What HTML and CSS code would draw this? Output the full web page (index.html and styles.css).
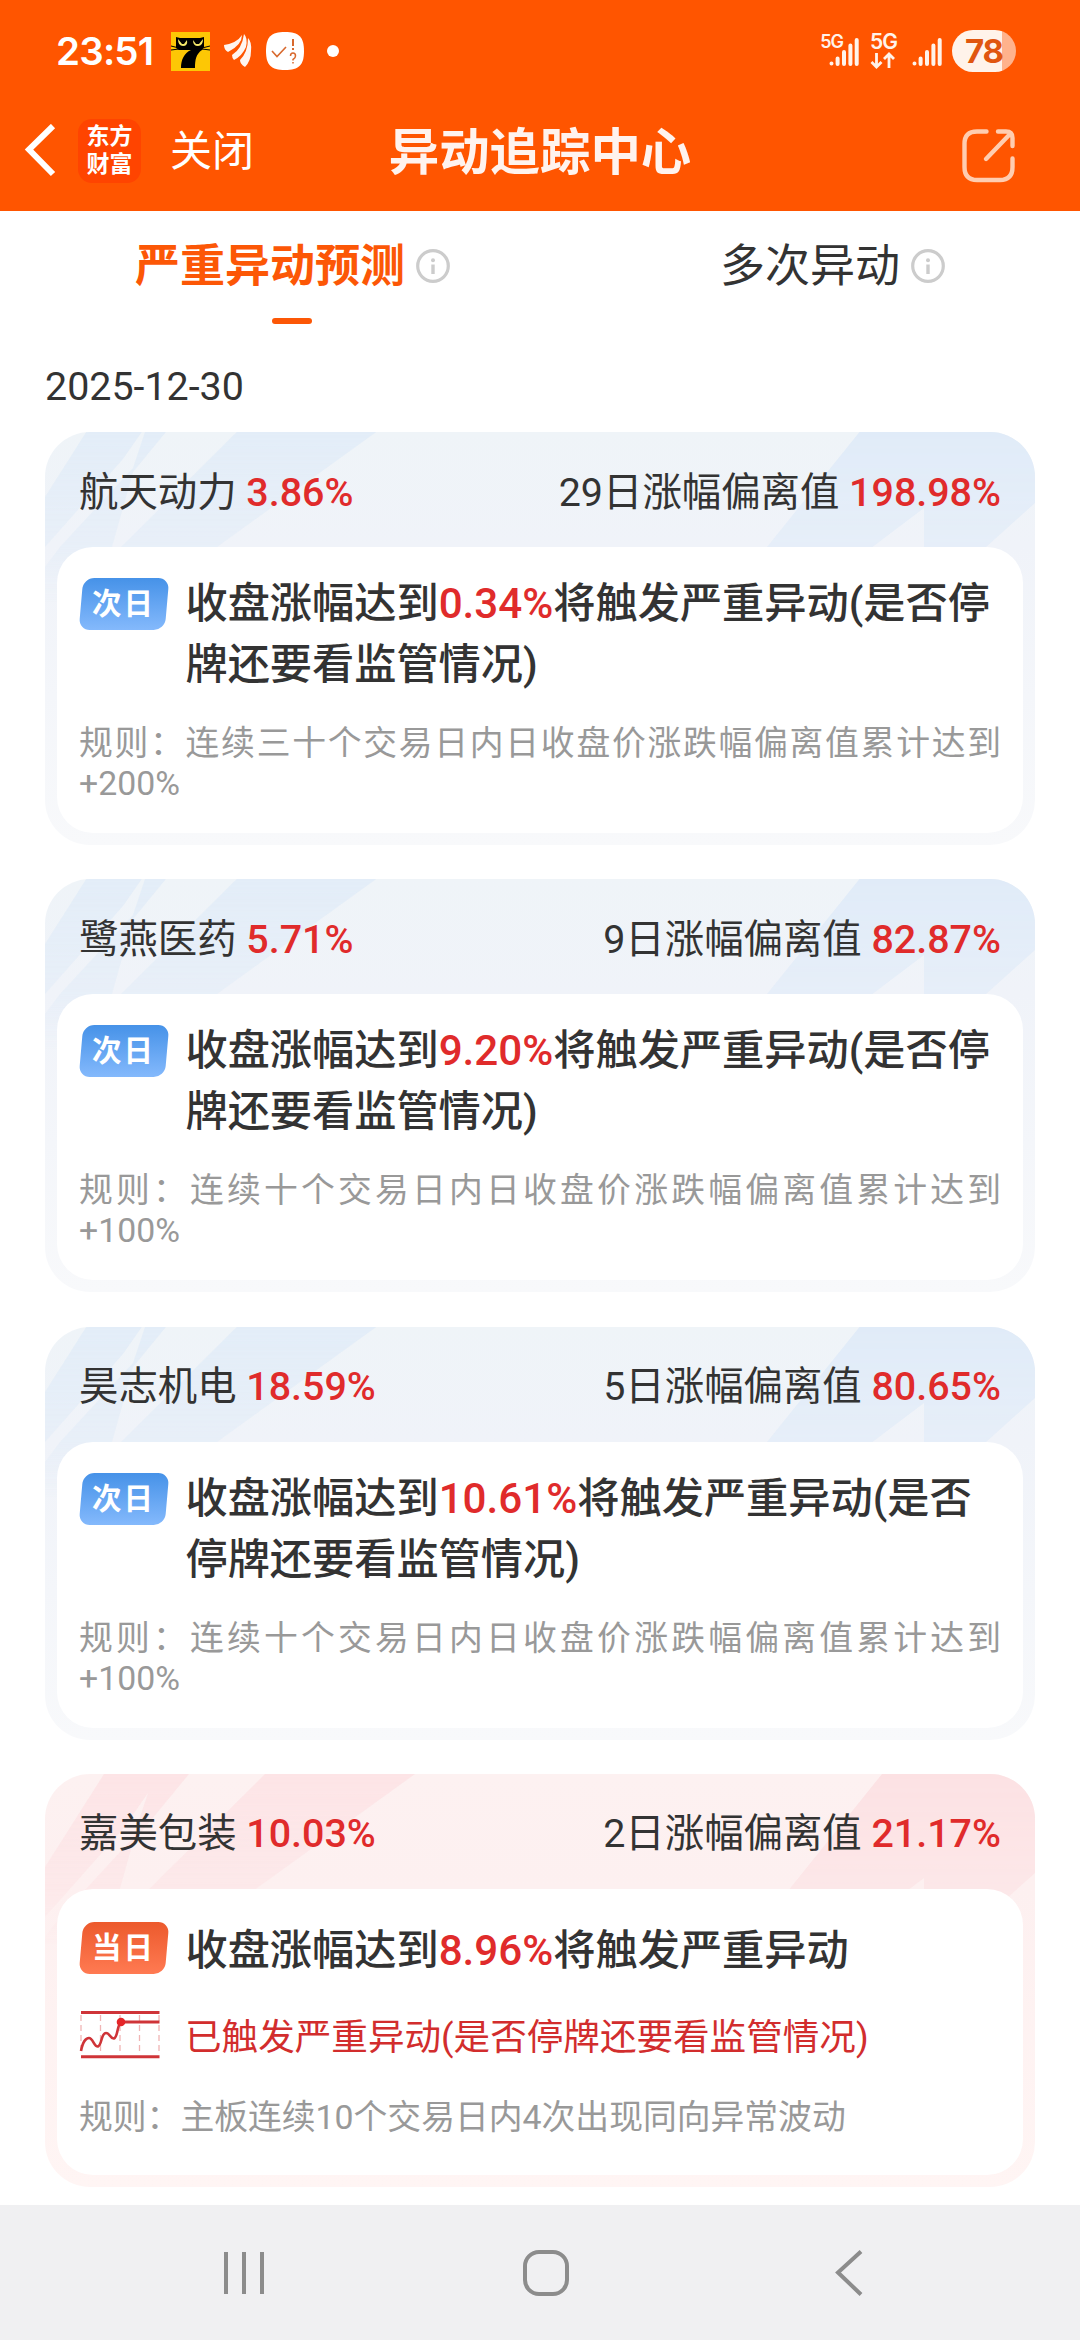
FILE: index.html
```html
<!DOCTYPE html>
<html lang="zh-CN">
<head>
    <meta charset="UTF-8">
    <meta name="viewport" content="width=device-width, initial-scale=1.0">
    <title>异动追踪中心</title>
    <link rel="stylesheet" href="styles.css">
</head>
<body>

<!-- Shared shapes -->
<svg class="defs" width="0" height="0">
    <symbol id="stripes" viewBox="0 -28 990 200">
        <path opacity="0.8" d="M59-28H144L88 40L67 115L50 172H0V135L15 115L88 36L103-9L78 27L0 115V65Z"/>
        <path opacity="0.8" d="M220-28H370L172 115L93 172H20L76 115Z"/>
        <path d="M837-28H990V71L941 115L877 172H879V76L752 172H676L722 115Z"/>
    </symbol>
    <symbol id="info" viewBox="0 0 34 34">
        <circle cx="17" cy="17" r="15.3" fill="none" stroke="#ccc" stroke-width="3.2"/>
        <circle cx="17" cy="11.3" r="2" fill="#ccc"/>
        <path d="M17 15.5V25" stroke="#ccc" stroke-width="3.4"/>
    </symbol>
</svg>

<header class="header">
    <div class="status-bar">
        <span class="time">23:51</span>
        <svg class="cat-icon" width="39" height="39" viewBox="0 0 39 39">
            <rect width="39" height="39" fill="#fdc705"/>
            <path d="M5 5L9 6H29L33 5V15L31 18C25 22 24 28 24 36H10C10 28 13 21 20 18H8L5 16Z" fill="#000"/>
            <path d="M0 14L8 16M0 18L8 17M39 14L31 16M39 18L31 17" stroke="#000" stroke-width="1"/>
            <path d="M7 7Q7 14 12 14Q17 14 16 8L13 12H11Z" fill="#f5e96b"/>
            <path d="M32 7Q32 14 27 14Q22 14 22 8L25 12H28Z" fill="#f5e96b"/>
            <path d="M12 8V12M26 8V12" stroke="#000" stroke-width="2"/>
        </svg>
        <svg class="wing-icon" width="28" height="34" viewBox="0 0 28 34">
            <path d="M0 11Q13 9 18 1Q18 11 4 18Q0 16 0 11Z" fill="#fff6f0"/>
            <path d="M8 21Q18 15 20 0Q24 4 22 13Q18 22 10 26Q8 24 8 21Z" fill="#fff6f0"/>
            <path d="M16 26Q24 18 24 4Q28 8 27 17Q27 27 21 33Q16 30 16 26Z" fill="#fff6f0"/>
        </svg>
        <svg class="check-icon" width="38" height="38" viewBox="0 0 38 38">
            <path d="M19 0C33 0 38 5 38 19S33 38 19 38S0 33 0 19S5 0 19 0Z" fill="#fff"/>
            <path d="M6 19L11 24.500L20 15" fill="none" stroke="#d8692e" stroke-width="1.600"/>
            <path d="M27 7V14M27 16V18" stroke="#d8692e" stroke-width="2"/>
            <path d="M24.500 24Q24.500 21 27 21T29.500 24Q29.500 26 27 27.500V28.500M27 30V31.500" fill="none" stroke="#d8692e" stroke-width="1.500"/>
        </svg>
        <span class="dot"></span>

        <div class="status-right">
            <span class="net net-small">5G</span>
            <svg class="signal" width="30" height="30" viewBox="0 0 30 30">
                <path d="M2.500 26.500V26.600M8.600 21.500V27M15 15V27M21.400 8.500V27M27.700 3V27" stroke="#fff3ea" stroke-width="4" stroke-linecap="round"/>
            </svg>
            <div class="net-data">
                <span class="net">5G</span>
                <svg width="26" height="17" viewBox="0 0 26 17">
                    <path d="M6.500 1V15M1.500 10L6.500 15L11.500 10M19 16V2M14 7L19 2L24 7" fill="none" stroke="#fff3ea" stroke-width="2.800"/>
                </svg>
            </div>
            <svg class="signal signal-second" width="30" height="30" viewBox="0 0 30 30">
                <path d="M2.500 26.500V26.600M8.600 21.500V27M15 15V27M21.400 8.500V27M27.700 3V27" stroke="#fff3ea" stroke-width="4" stroke-linecap="round"/>
            </svg>
            <span class="battery">78</span>
        </div>
    </div>

    <div class="title-bar">
        <div class="title-left">
            <svg width="32" height="54" viewBox="0 0 32 54">
                <path d="M29 2L5 25.500L29 50" fill="none" stroke="#fff" stroke-width="6"/>
            </svg>
            <div class="logo">东方<br>财富</div>
            <span class="close">关闭</span>
        </div>
        <h1>异动追踪中心</h1>
        <svg class="share" width="54" height="54" viewBox="0 0 54 54">
            <path d="M24.500 2.500H15Q2.500 2.500 2.500 15V38Q2.500 51 15 51H38Q50.500 51 50.500 38V29.500M50.500 17V9Q50.500 2.500 44 2.500H36M49 4L24 30" fill="none" stroke="#ffcdb0" stroke-width="4.400" stroke-linecap="round"/>
        </svg>
    </div>
</header>

<nav class="tabs">
    <div class="tab active">
        <span>严重异动预测</span>
        <svg class="info"><use href="#info"/></svg>
    </div>
    <div class="tab">
        <span>多次异动</span>
        <svg class="info"><use href="#info"/></svg>
    </div>
</nav>

<main class="list">
    <div class="date">2025-12-30</div>

    <section class="card">
        <svg class="stripes" viewBox="0 0 990 172"><use href="#stripes" y="-28" width="990" height="200"/></svg>
        <div class="card-head">
            <span>航天动力 <b>3.86%</b></span>
            <span>29日涨幅偏离值 <b>198.98%</b></span>
        </div>
        <div class="card-body">
            <div class="event">
                <span class="tag"><i>次日</i></span>
                <p>收盘涨幅达到<b>0.34%</b>将触发严重异动(是否停牌还要看监管情况)</p>
            </div>
            <p class="rule">规则：连续三十个交易日内日收盘价涨跌幅偏离值累计达到+200%</p>
        </div>
    </section>

    <section class="card">
        <svg class="stripes" viewBox="0 0 990 172"><use href="#stripes" y="-28" width="990" height="200"/></svg>
        <div class="card-head">
            <span>鹭燕医药 <b>5.71%</b></span>
            <span>9日涨幅偏离值 <b>82.87%</b></span>
        </div>
        <div class="card-body">
            <div class="event">
                <span class="tag"><i>次日</i></span>
                <p>收盘涨幅达到<b>9.20%</b>将触发严重异动(是否停牌还要看监管情况)</p>
            </div>
            <p class="rule">规则：连续十个交易日内日收盘价涨跌幅偏离值累计达到+100%</p>
        </div>
    </section>

    <section class="card">
        <svg class="stripes" viewBox="0 0 990 172"><use href="#stripes" y="-28" width="990" height="200"/></svg>
        <div class="card-head">
            <span>昊志机电 <b>18.59%</b></span>
            <span>5日涨幅偏离值 <b>80.65%</b></span>
        </div>
        <div class="card-body">
            <div class="event">
                <span class="tag"><i>次日</i></span>
                <p>收盘涨幅达到<b>10.61%</b>将触发严重异动(是否停牌还要看监管情况)</p>
            </div>
            <p class="rule">规则：连续十个交易日内日收盘价涨跌幅偏离值累计达到+100%</p>
        </div>
    </section>

    <section class="card today">
        <svg class="stripes" viewBox="0 0 990 172"><use href="#stripes" width="990" height="200"/></svg>
        <div class="card-head">
            <span>嘉美包装 <b>10.03%</b></span>
            <span>2日涨幅偏离值 <b>21.17%</b></span>
        </div>
        <div class="card-body">
            <div class="event">
                <span class="tag"><i>当日</i></span>
                <p>收盘涨幅达到<b>8.96%</b>将触发严重异动</p>
            </div>
            <div class="triggered">
                <svg width="82" height="50" viewBox="0 0 82 50">
                    <path d="M2 5V45M21.500 5V45M41 5V45M60.500 5V45M80 5V45" stroke="#f0b4b4" stroke-width="1.300" stroke-dasharray="6 4"/>
                    <path d="M2 2.500H80.500M2 46.800H80.500M42 12H80.500" stroke="#cf3438" stroke-width="3"/>
                    <path d="M2 41C4 30 8 28 10 28C14 28 15 37 19 36.500C23 35 22 23 27 23C31 23 31 29 35 28.500C39 27 38 15 42 12" fill="none" stroke="#cf3438" stroke-width="2.600"/>
                    <circle cx="42" cy="12" r="4.300" fill="#e52528"/>
                </svg>
                <span>已触发严重异动(是否停牌还要看监管情况)</span>
            </div>
            <p class="rule">规则：主板连续10个交易日内4次出现同向异常波动</p>
        </div>
    </section>
</main>

<footer class="nav-bar">
    <svg width="40" height="46" viewBox="0 0 40 46">
        <path d="M2 2V44M20 2V44M38 2V44" stroke="#8c8c8c" stroke-width="4"/>
    </svg>
    <svg class="home" width="46" height="46" viewBox="0 0 46 46">
        <rect x="2" y="2" width="42" height="42" rx="14" fill="none" stroke="#8c8c8c" stroke-width="4"/>
    </svg>
    <svg width="28" height="46" viewBox="0 0 28 46">
        <path d="M26 1.500L3 22.500L26 44.500" fill="none" stroke="#8c8c8c" stroke-width="4"/>
    </svg>
</footer>

</body>
</html>
```
FILE: styles.css
```css
* {
    box-sizing: border-box;
}
body {
    display: flex;
    flex-direction: column;
    width: 1080px;
    height: 2340px;
    margin: 0;
    overflow: hidden;
    background-color: #fff;
    color: #333;
    font-family: Roboto, "Noto Sans CJK SC", sans-serif;
}
p, h1 {
    margin: 0;
}
svg {
    display: block;
    flex: none;
}
b {
    color: #e02b2b;
    font-weight: 500;
}
.defs {
    position: absolute;
}

/* Header */
.header {
    flex: none;
    height: 211px;
    background-color: #ff5500;
    color: #fff;
}
.status-bar {
    display: flex;
    align-items: center;
    height: 102px;
    padding: 0 64px 0 56px;
}
.time {
    width: 98px;
    font-family: Inter, sans-serif;
    font-size: 38.500px;
    font-weight: 600;
    line-height: 40px;
    letter-spacing: -0.8px;
    white-space: nowrap;
}
.cat-icon {
    margin-left: 17px;
}
.wing-icon {
    margin-left: 14px;
}
.check-icon {
    margin-left: 14px;
}
.dot {
    width: 12px;
    height: 12px;
    margin-left: 23px;
    border-radius: 50%;
    background-color: #fff;
}
.status-right {
    display: flex;
    align-items: center;
    margin-left: auto;
    color: #fff3ea;
}
.net {
    font-family: Inter, sans-serif;
    font-size: 21px;
    font-weight: 600;
    line-height: 17px;
    letter-spacing: -1px;
}
.net-small {
    margin: 0 -14px 20px 0;
    font-size: 18px;
}
.signal {
    margin-top: 2px;
}
.net-data {
    display: flex;
    flex-direction: column;
    gap: 2px;
    width: 26px;
    margin-left: 11px;
}
.signal-second {
    margin-left: 16px;
}
.battery {
    width: 64px;
    height: 42px;
    margin-left: 10px;
    border-radius: 21px;
    background: linear-gradient(90deg, #fff3ea 50px, #ffb28c 50px);
    color: #e0560f;
    font-family: Inter, sans-serif;
    font-size: 33px;
    font-weight: 700;
    line-height: 42px;
    letter-spacing: -1px;
    text-align: center;
}
.title-bar {
    display: grid;
    grid-template-columns: 1fr auto 1fr;
    align-items: center;
    height: 98px;
    padding: 0 64px 0 24px;
}
.title-left {
    display: flex;
    align-items: center;
}
.logo {
    width: 63px;
    height: 64px;
    margin-left: 22px;
    padding-top: 4px;
    border-radius: 14px;
    background-color: #ff4400;
    font-size: 23px;
    font-weight: 700;
    line-height: 28px;
    text-align: center;
}
.close {
    margin: 2px 0 0 29px;
    font-size: 42px;
    line-height: 60px;
}
h1 {
    margin: 3px 0 0 40px;
    color: #fff3ee;
    font-size: 50.400px;
    font-weight: 700;
    line-height: 70px;
}
.share {
    justify-self: end;
    margin-top: 10px;
}

/* Tabs */
.tabs {
    display: flex;
    flex: none;
    height: 129px;
}
.tab {
    position: relative;
    display: flex;
    flex: 1;
    align-items: center;
    justify-content: center;
    gap: 11px;
    height: 109px;
    padding-left: 45px;
    font-size: 45px;
    line-height: 60px;
}
.tab span {
    padding-top: 2px;
}
.tab.active {
    color: #fc5706;
    font-weight: 700;
}
.tab.active::after {
    content: "";
    position: absolute;
    bottom: -4px;
    left: 272px;
    width: 40px;
    height: 6px;
    border-radius: 3px;
    background-color: #fc5706;
}
.info {
    width: 34px;
    height: 34px;
}

/* List */
.list {
    flex: 1;
    min-height: 0;
    padding: 0 45px;
    overflow: hidden;
}
.date {
    height: 92px;
    font-size: 39.400px;
    line-height: 94px;
}
.card {
    position: relative;
    height: 413px;
    margin-bottom: 34.300px;
    padding: 0 12px 12px;
    overflow: hidden;
    border-radius: 45px;
    background: linear-gradient(#eff4f8, #f0f3f9 115px, #f8f9fb);
}
.card.today {
    background: linear-gradient(#fdf1f1, #fdf0f0 115px, #fff5f4);
}
.stripes {
    position: absolute;
    top: 0;
    left: 0;
    width: 990px;
    height: 172px;
    fill: #e0ebf8;
    -webkit-mask-image: linear-gradient(#000, rgba(0, 0, 0, 0.6) 115px, transparent);
    mask-image: linear-gradient(#000, rgba(0, 0, 0, 0.6) 115px, transparent);
}
.today .stripes {
    fill: #fce1e3;
}
.card-head {
    position: relative;
    display: flex;
    align-items: center;
    justify-content: space-between;
    height: 115px;
    padding: 0 22px 3px;
    font-size: 39.400px;
}
.card-body {
    position: relative;
    height: 286px;
    padding: 25px 22px 0;
    border-radius: 36px;
    background-color: #fff;
}
.event {
    display: flex;
    align-items: flex-start;
    font-size: 42.200px;
    font-weight: 500;
    line-height: 61px;
}
.event p {
    flex: 1;
    padding-top: 1px;
}
.tag {
    flex: none;
    width: 86px;
    height: 52px;
    margin: 6px 18.500px 0 2px;
    border-radius: 11px;
    background: linear-gradient(#4692e8, #84b9fc);
    color: #fff;
    font-size: 29.500px;
    font-weight: 700;
    line-height: 52px;
    text-align: center;
    transform: skewX(-5deg);
}
.tag i {
    display: inline-block;
    font-style: normal;
    letter-spacing: 2px;
    transform: skewX(5deg);
}
.today .tag {
    margin-top: 8px;
    background: linear-gradient(#ec5a2d, #ff7a52);
}
.today .event p {
    padding-top: 6px;
}
.rule {
    margin-top: 29px;
    color: #999;
    font-size: 33.800px;
    line-height: 40px;
    text-align: justify;
}
.triggered {
    display: flex;
    align-items: center;
    gap: 24px;
    height: 50px;
    margin-top: 29px;
    color: #d22d2d;
    font-size: 36.600px;
}
.today .rule {
    margin-top: 38px;
}

/* Bottom navigation */
.nav-bar {
    display: flex;
    flex: none;
    align-items: center;
    justify-content: space-between;
    height: 135px;
    padding: 0 217px 0 224px;
    background-color: #f0f0f2;
}
.home {
    margin: 0 4px 0 -4px;
}
```
